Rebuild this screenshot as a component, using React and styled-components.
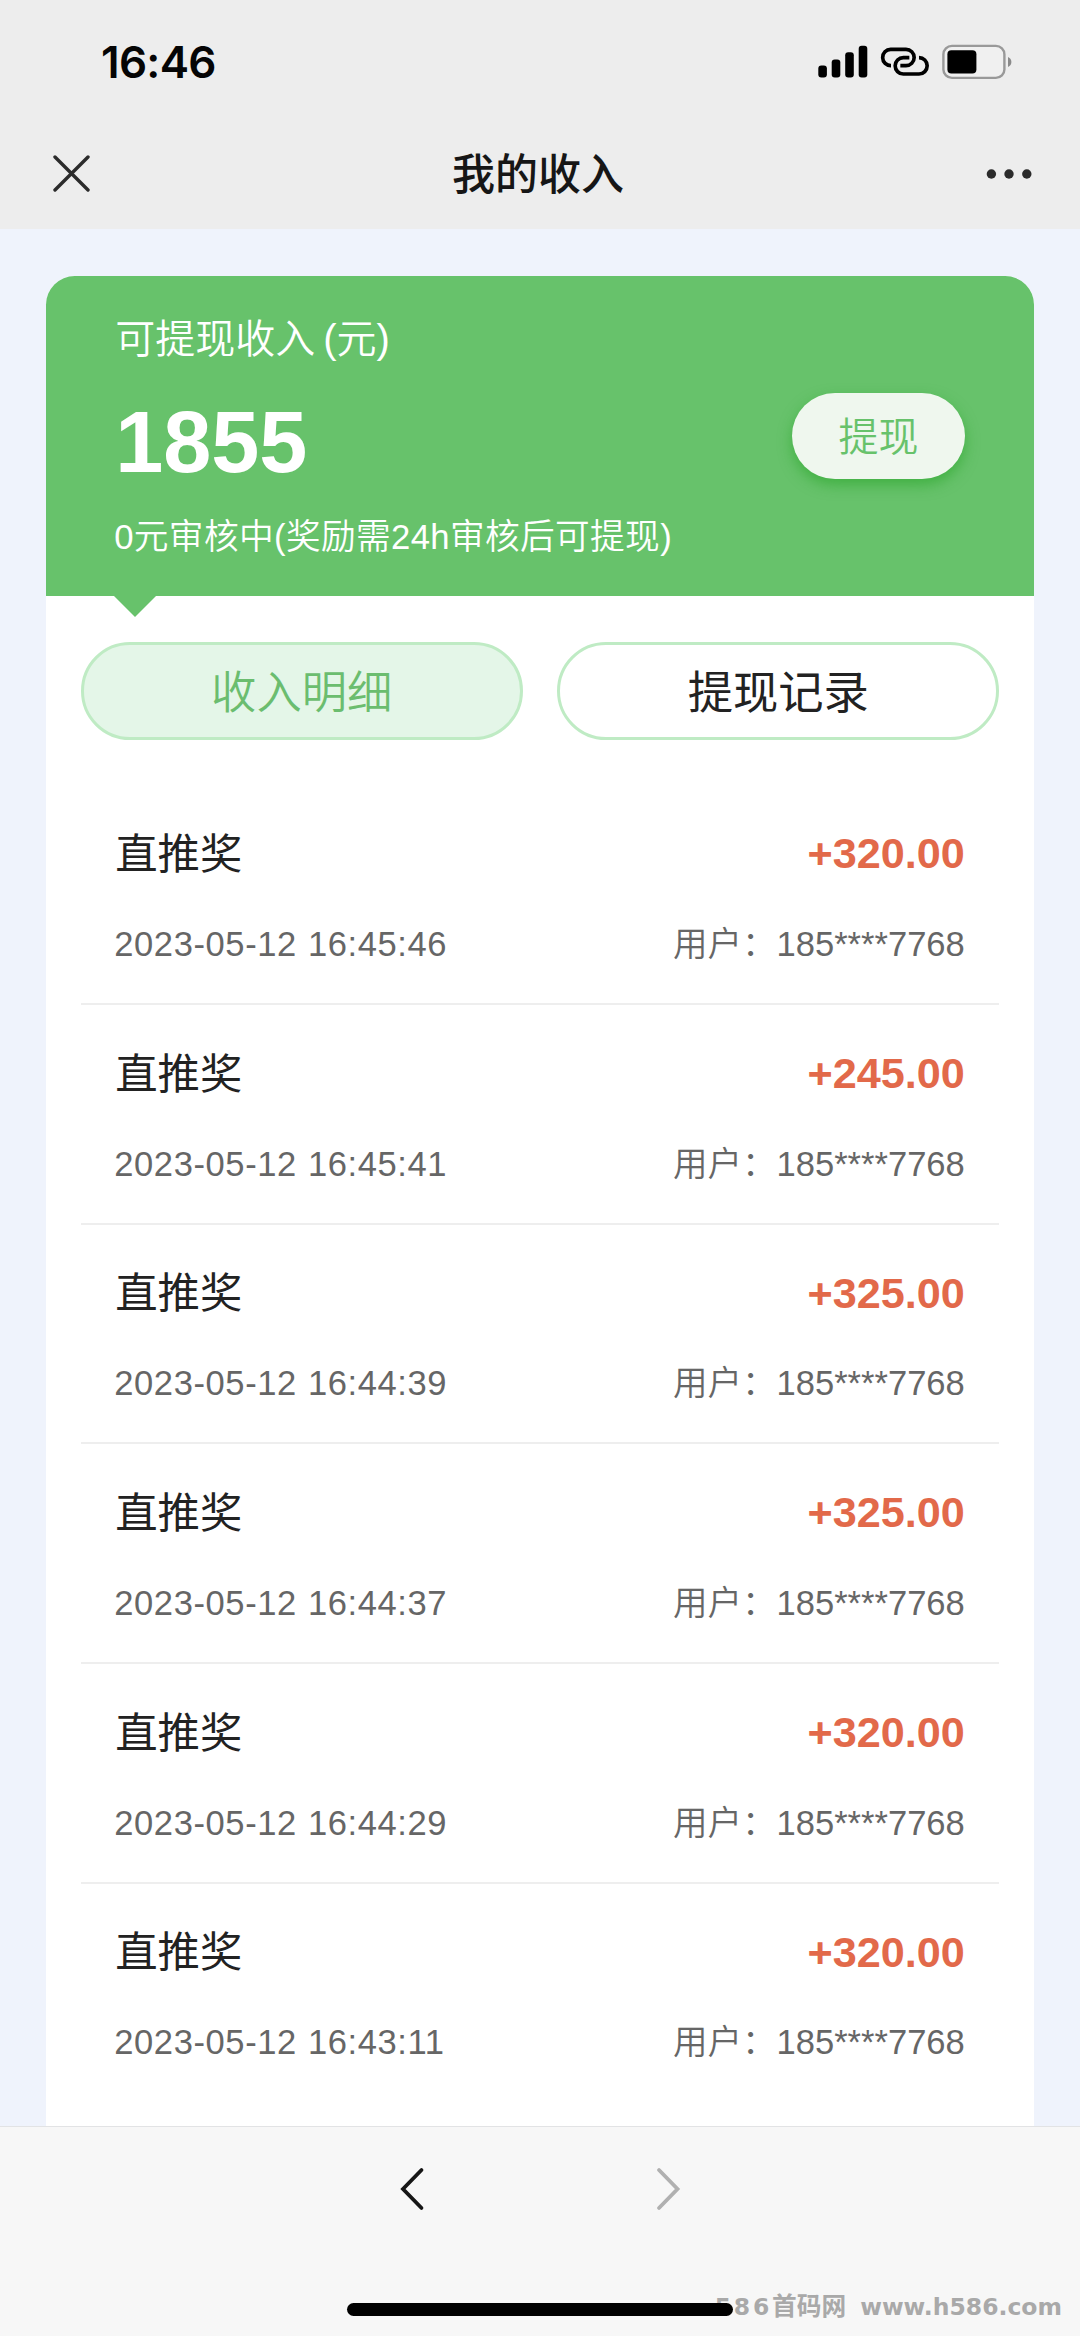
import React, { useState } from "react";
import styled, { createGlobalStyle } from "styled-components";

const GlobalStyle = createGlobalStyle`
  * {
    box-sizing: border-box;
  }

  body {
    margin: 0;
    background: #eff3fc;
    font-family: "Liberation Sans", "Noto Sans CJK SC", sans-serif;
  }
`;

const Page = styled.div`
  position: relative;
  width: 1080px;
  height: 2336px;
  display: flex;
  flex-direction: column;
  overflow: hidden;
  background: #eff3fc;
`;

const TopArea = styled.header`
  height: 229.4px;
  flex-shrink: 0;
  background: #ededed;
`;

const StatusBar = styled.div`
  height: 118px;
  padding: 5px 68px 0 101px;
  display: flex;
  align-items: center;
  justify-content: space-between;
`;

const Clock = styled.span`
  font-family: "Inter", sans-serif;
  font-size: 44px;
  line-height: 54px;
  font-weight: 600;
  letter-spacing: -0.7px;
  color: #050505;
`;

const StatusIcons = styled.div`
  display: flex;
  align-items: center;

  svg {
    display: block;
  }
`;

const NavBar = styled.div`
  height: 111px;
  padding: 0 48px 0 53px;
  display: grid;
  grid-template-columns: 1fr auto 1fr;
  align-items: center;

  svg {
    display: block;
  }

  svg:last-child {
    justify-self: end;
  }
`;

const NavTitle = styled.h1`
  margin: 0;
  padding: 2px 9px 0 0;
  font-size: 43px;
  line-height: 60px;
  font-weight: 500;
  color: #161616;
`;

const Content = styled.main`
  flex: 1;
  min-height: 0;
  overflow: hidden;
  padding: 46.6px 46.1px 0;
`;

const Card = styled.section`
  height: 100%;
  border-radius: 28.8px 28.8px 0 0;
  background: #fff;
`;

const Summary = styled.div`
  position: relative;
  height: 320.5px;
  padding: 35.5px 69.1px 0;
  display: flex;
  justify-content: space-between;
  border-radius: 28.8px 28.8px 0 0;
  background: #67c26b;
  color: #fff;

  &::after {
    content: "";
    position: absolute;
    left: 67.5px;
    top: 100%;
    border: 21.6px solid transparent;
    border-top-color: #67c26b;
    border-bottom: 0;
  }
`;

const SummaryLabel = styled.div`
  font-size: 40px;
  line-height: 56px;
  font-weight: 350;
  word-spacing: -3px;
`;

const Balance = styled.div`
  margin: 32px 0;
  font-size: 86.4px;
  line-height: 86px;
  font-weight: 700;
`;

const SummaryNote = styled.div`
  margin-left: -1px;
  font-size: 34.7px;
  line-height: 40px;
  font-weight: 350;
  letter-spacing: 0.35px;
`;

const WithdrawButton = styled.button`
  width: 172.8px;
  height: 86.4px;
  margin-top: 81.5px;
  padding: 0 0 4px;
  border: 0;
  border-radius: 44px;
  background: #eff7ee;
  box-shadow: 0 6px 14px rgba(40, 165, 40, 0.6);
  font-family: inherit;
  font-size: 40px;
  font-weight: 350;
  color: #67c26b;
`;

const Tabs = styled.div`
  padding: 46px 34.56px 0;
  display: grid;
  grid-template-columns: 1fr 1fr;
  gap: 34.56px;
`;

const Tab = styled.button`
  height: 97.9px;
  padding: 0 0 4px;
  border: 3px solid #bfebc4;
  border-radius: 49px;
  background: ${({ $active }) => ($active ? "#e4f6e8" : "#fff")};
  font-family: inherit;
  font-size: 45.3px;
  font-weight: ${({ $active }) => ($active ? 350 : 400)};
  color: ${({ $active }) => ($active ? "#6bbd6f" : "#222")};
`;

const RecordList = styled.ul`
  list-style: none;
  margin: 45px 34.56px 0;
  padding: 0;
`;

const Record = styled.li`
  height: 219.7px;
  padding: 39.5px 34.56px 0;
  border-bottom: 2.5px solid #eee;

  &:last-child {
    border-bottom: 0;
  }
`;

const RecordLine = styled.div`
  display: flex;
  align-items: center;
  justify-content: space-between;
`;

const RecordTitle = styled.span`
  font-size: 42.4px;
  line-height: 60px;
  color: #222;
`;

const Amount = styled.span`
  margin-top: -3px;
  font-size: 43.2px;
  line-height: 60px;
  font-weight: 700;
  color: #e2694a;
`;

const Meta = styled.span`
  margin-top: 34px;
  font-size: 34.56px;
  line-height: 50px;
  font-weight: 350;
  color: #666;
`;

const RecordTime = styled(Meta)`
  margin-left: -1px;
  letter-spacing: 0.6px;
  word-spacing: 0.8px;
`;

const BottomBar = styled.footer`
  height: 210.5px;
  flex-shrink: 0;
  display: flex;
  justify-content: center;
  gap: 229px;
  padding-top: 40px;
  border-top: 1.5px solid #e2e3e5;
  background: #f7f7f7;
`;

const HomeIndicator = styled.div`
  position: absolute;
  left: 347px;
  bottom: 20px;
  width: 386px;
  height: 13px;
  border-radius: 7px;
  background: #000;
`;

const Watermark = styled.div`
  position: absolute;
  right: 18px;
  bottom: 14px;
  display: flex;
  align-items: baseline;
  font-family: "DejaVu Sans", "Noto Sans CJK SC", sans-serif;
  font-size: 23.5px;
  line-height: 30px;
  font-weight: 700;
  color: #a9a9a9;
  white-space: pre;
`;

const SiteNumber = styled.span`
  letter-spacing: 2.8px;
`;

const SiteName = styled.span`
  margin-right: 14px;
  font-size: 24.7px;
`;

const SignalIcon = () => (
  <svg width="50" height="34" viewBox="0 0 50 34">
    <rect x="0.3" y="20.4" width="8.6" height="12" rx="3" />
    <rect x="13.7" y="14.4" width="8.6" height="18" rx="3" />
    <rect x="27.2" y="7.2" width="8.6" height="25.2" rx="3" />
    <rect x="40.7" y="0.8" width="8.6" height="31.6" rx="3" />
  </svg>
);

const LinkIcon = () => (
  <svg width="50" height="31" viewBox="238 48 150 93" fill="none" stroke="#000" strokeWidth="11">
    <path d="M271 107 A24.5 24.5 0 0 1 270 58 H316 A24.5 24.5 0 0 1 316 107 H299" />
    <path d="M326 83 H308 A24.5 24.5 0 0 0 308 132 H355 A24.5 24.5 0 0 0 355 83" />
  </svg>
);

const BatteryIcon = () => (
  <svg width="70" height="36" viewBox="0 0 70 36">
    <rect x="1.4" y="1.9" width="61" height="32" rx="8.5" fill="#f0f0f0" stroke="#999" strokeWidth="2.4" />
    <rect x="5.4" y="6.2" width="29" height="23.2" rx="4" fill="#000" />
    <path d="M66 13 Q69.4 14.6 69.4 18 Q69.4 21.4 66 23 Z" fill="#8a8a8a" />
  </svg>
);

const SignalSlot = styled.div`
  margin-right: 12px;
`;

const LinkSlot = styled.div`
  margin-right: 12px;
`;

const CloseIcon = () => (
  <svg width="37" height="37" viewBox="0 0 37 37" stroke="#2b2b2b" strokeWidth="3.4" strokeLinecap="round">
    <path d="M2 2 L35 35 M35 2 L2 35" />
  </svg>
);

const MoreIcon = () => (
  <svg width="46" height="12" viewBox="0 0 46 12" fill="#2b2b2b">
    <circle cx="5.4" cy="6" r="4.7" />
    <circle cx="23" cy="6" r="4.7" />
    <circle cx="40.8" cy="6" r="4.7" />
  </svg>
);

const Chevron = ({ back }) => (
  <svg width="26" height="44" viewBox="0 0 26 44" fill="none" stroke={back ? "#161616" : "#b0b0b0"} strokeWidth="3.8" strokeLinecap="round">
    <path d={back ? "M21.5 3 L3 22 L21.5 41" : "M4 3 L22.5 22 L4 41"} />
  </svg>
);

const tabs = ["收入明细", "提现记录"];

const records = [
  { amount: "+320.00", time: "2023-05-12 16:45:46" },
  { amount: "+245.00", time: "2023-05-12 16:45:41" },
  { amount: "+325.00", time: "2023-05-12 16:44:39" },
  { amount: "+325.00", time: "2023-05-12 16:44:37" },
  { amount: "+320.00", time: "2023-05-12 16:44:29" },
  { amount: "+320.00", time: "2023-05-12 16:43:11" },
];

const App = () => {
  const [activeTab, setActiveTab] = useState(0);

  return (
    <Page>
      <GlobalStyle />
      <TopArea>
        <StatusBar>
          <Clock>16:46</Clock>
          <StatusIcons>
            <SignalSlot><SignalIcon /></SignalSlot>
            <LinkSlot><LinkIcon /></LinkSlot>
            <BatteryIcon />
          </StatusIcons>
        </StatusBar>
        <NavBar>
          <CloseIcon />
          <NavTitle>我的收入</NavTitle>
          <MoreIcon />
        </NavBar>
      </TopArea>

      <Content>
        <Card>
          <Summary>
            <div>
              <SummaryLabel>可提现收入 (元)</SummaryLabel>
              <Balance>1855</Balance>
              <SummaryNote>0元审核中(奖励需24h审核后可提现)</SummaryNote>
            </div>
            <WithdrawButton>提现</WithdrawButton>
          </Summary>
          <Tabs>
            {tabs.map((name, index) => (
              <Tab
                key={name}
                $active={index === activeTab}
                onClick={() => setActiveTab(index)}>
                {name}
              </Tab>
            ))}
          </Tabs>
          <RecordList>
            {records.map((item, index) => (
              <Record key={index}>
                <RecordLine>
                  <RecordTitle>直推奖</RecordTitle>
                  <Amount>{item.amount}</Amount>
                </RecordLine>
                <RecordLine>
                  <RecordTime>{item.time}</RecordTime>
                  <Meta>用户：185****7768</Meta>
                </RecordLine>
              </Record>
            ))}
          </RecordList>
        </Card>
      </Content>

      <BottomBar>
        <Chevron back />
        <Chevron />
      </BottomBar>
      <Watermark>
        <SiteNumber>586</SiteNumber>
        <SiteName>首码网</SiteName>
        <span>www.h586.com</span>
      </Watermark>
      <HomeIndicator />
    </Page>
  );
};

export default App;
